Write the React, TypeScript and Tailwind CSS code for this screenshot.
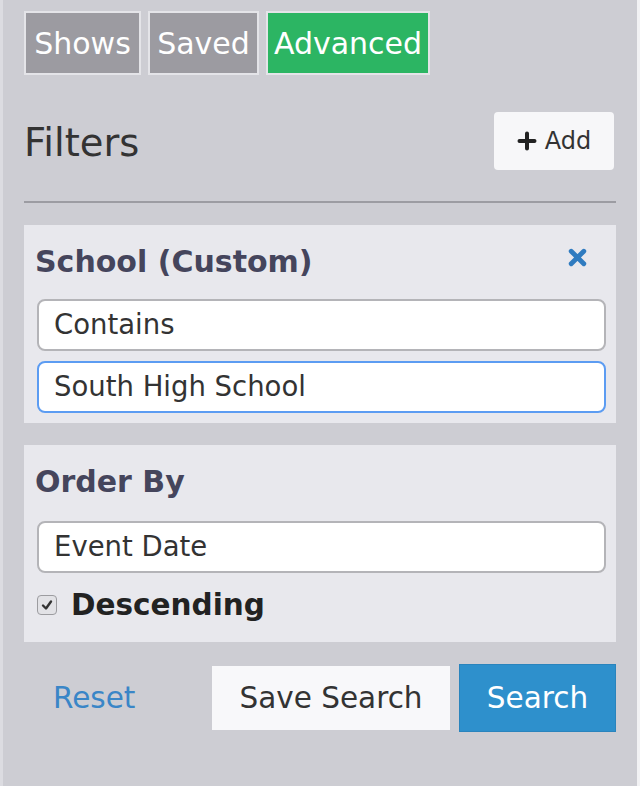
import React from 'react';

const tabs = [
  { label: 'Shows', width: 'w-[117px]', active: false },
  { label: 'Saved', width: 'w-[111px]', active: false },
  { label: 'Advanced', width: 'w-[164px]', active: true }
];

function CloseIcon() {
  return (
    <svg viewBox="0 0 20 20" className="-mt-[8px] h-[21px] w-[21px]">
      <path d="M4 4 L16 16 M16 4 L4 16" stroke="#2f7bc0" strokeWidth="4.6" strokeLinecap="round" />
    </svg>);
}

function PlusIcon() {
  return (
    <svg viewBox="0 0 20 20" className="h-[20px] w-[20px]">
      <path d="M10 2.5 V17.5 M2.5 10 H17.5" stroke="#222" strokeWidth="4" strokeLinecap="round" />
    </svg>);
}

function CheckBox() {
  return (
    <span className="grid h-[20px] w-[20px] place-items-center rounded-[4px] border border-[#9c9ca0] bg-[#e2e2e6]">
      <svg viewBox="0 0 14 14" className="h-[14px] w-[14px]">
        <path d="M3 7.5 L6 10.5 L11 3.5" fill="none" stroke="#333" strokeWidth="2.4" strokeLinecap="round" strokeLinejoin="round" />
      </svg>
    </span>);
}

function Field({ value, focused = false }: { value: string; focused?: boolean }) {
  return (
    <div
      className={`flex h-[52px] items-center rounded-[8px] border-2 bg-white pl-[15px] text-[27.5px] text-[#333] ${
      focused ? 'border-[#5c9cf2]' : 'border-[#b4b4b8]'}`}>
      {value}
    </div>);
}

export default function App() {
  return (
    <div
      className="flex h-[786px] w-[640px] flex-col border-l-[3px] border-r-[3px] border-l-[#dcdce1] border-r-[#f2f2f4] bg-[#cdcdd3] px-[21px]"
      style={{ fontFamily: '"DejaVu Sans", Verdana, sans-serif' }}>
      
      <div className="mt-[11px] flex gap-[7px]">
        {tabs.map((tab) =>
        <div
          key={tab.label}
          className={`flex h-[64px] items-center justify-center border-2 border-[#e4e4e8] text-[30px] text-white ${tab.width} ${
          tab.active ? 'bg-[#2cb563]' : 'bg-[#9c9ba1]'}`}>
          
            {tab.label}
          </div>
        )}
      </div>

      <div className="mt-[37px] flex h-[58px] items-center justify-between">
        <span className="pt-[3px] text-[38.5px] text-[#333]">Filters</span>
        <button
          type="button"
          className="mr-[2px] flex h-[58px] w-[120px] items-center justify-center gap-[8px] rounded-[4px] bg-[#f7f7f9] text-[24px] text-[#333]">
          
          <PlusIcon /> Add
        </button>
      </div>

      <div className="mt-[31px] h-[2px] bg-[#9c9ca2]" />

      <div className="mt-[22px] flex h-[198px] flex-col bg-[#e8e8ed] pl-[13px] pr-[10px] pt-[18px]">
        <div className="-ml-[2px] flex h-[36px] items-center justify-between pr-[18px]">
          <span className="text-[30px] font-bold text-[#45455c]">School (Custom)</span>
          <CloseIcon />
        </div>
        <div className="mt-[20px] flex flex-col gap-[10px]">
          <Field value="Contains" />
          <Field value="South High School" focused />
        </div>
      </div>

      <div className="mt-[22px] flex h-[197px] flex-col bg-[#e8e8ed] pl-[13px] pr-[10px] pt-[18px]">
        <div className="-ml-[2px] flex h-[36px] items-center">
          <span className="text-[30px] font-bold text-[#45455c]">Order By</span>
        </div>
        <div className="mt-[22px]">
          <Field value="Event Date" />
        </div>
        <label className="mt-[10px] flex items-center gap-[14px]">
          <CheckBox />
          <span className="text-[29.5px] font-bold text-[#222]">Descending</span>
        </label>
      </div>

      <div className="mt-[22px] flex items-center">
        <a className="ml-[29px] text-[29.5px] text-[#3a86c7]">Reset</a>
        <button
          type="button"
          className="ml-auto h-[64px] w-[238px] bg-[#f8f8fa] text-[29.5px] text-[#333]">
          
          Save Search
        </button>
        <button
          type="button"
          className="ml-[9px] h-[68px] w-[157px] border border-[#2a84bd] bg-[#2e90cc] text-[29.5px] text-white">
          
          Search
        </button>
      </div>
    </div>);
}
